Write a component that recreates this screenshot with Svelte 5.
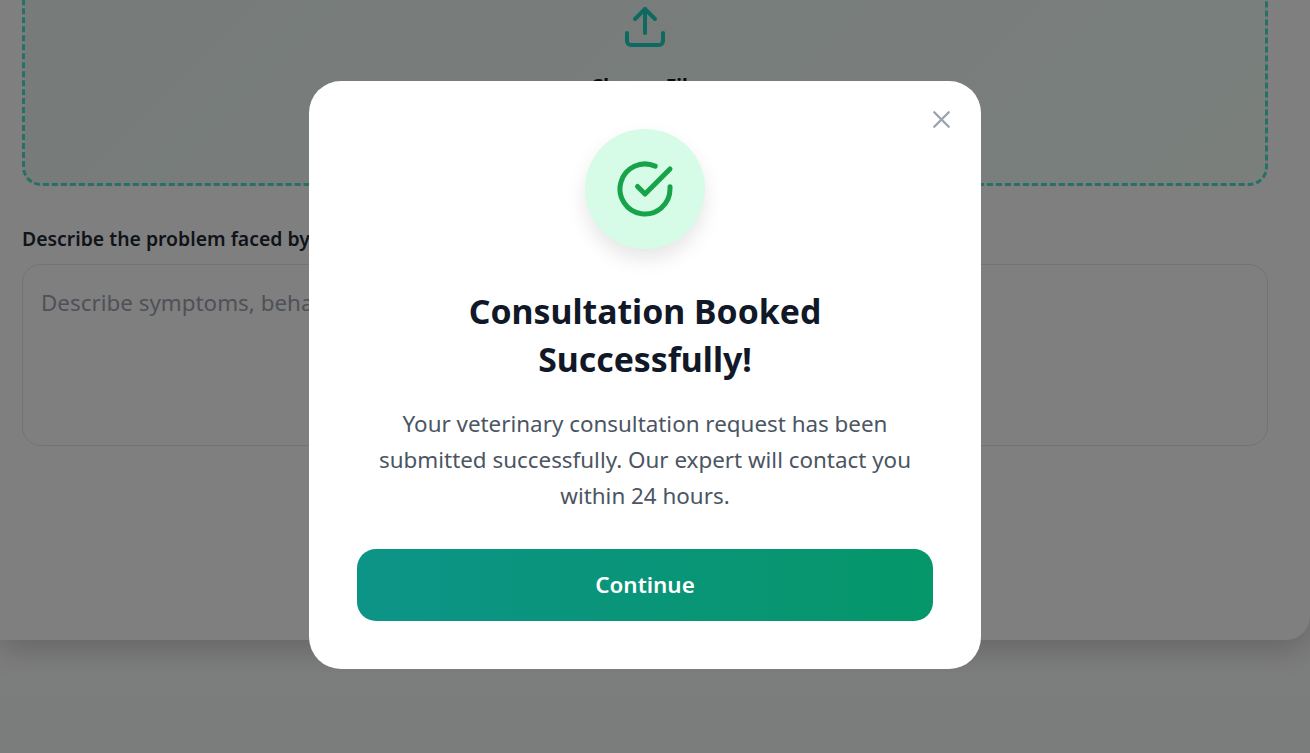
<script>
  let open = $state(true);
</script>

<div class="page">
  <main class="card">
    <div class="dropzone">
      <svg class="upload" viewBox="0 0 24 24" fill="none" stroke="currentColor" stroke-width="2" stroke-linecap="round" stroke-linejoin="round" aria-hidden="true">
        <path d="M21 15v4a2 2 0 0 1-2 2H5a2 2 0 0 1-2-2v-4" />
        <polyline points="17 8 12 3 7 8" />
        <line x1="12" y1="3" x2="12" y2="15" />
      </svg>
      <div class="choose">Choose File</div>
    </div>
    <label class="label" for="problem">Describe the problem faced by your pet</label>
    <textarea id="problem" class="area" placeholder="Describe symptoms, behavior changes, or concerns"></textarea>
  </main>
</div>

{#if open}
  <div class="overlay">
    <div class="modal" role="dialog" aria-modal="true">
      <button class="close" aria-label="Close" onclick={() => (open = false)}>
        <svg viewBox="0 0 24 24" fill="none" stroke="currentColor" stroke-width="2" stroke-linecap="round" stroke-linejoin="round">
          <path d="M18 6 6 18" />
          <path d="m6 6 12 12" />
        </svg>
      </button>
      <div class="badge">
        <svg viewBox="0 0 24 24" fill="none" stroke="currentColor" stroke-width="2" stroke-linecap="round" stroke-linejoin="round" aria-hidden="true">
          <path d="M22 11.08V12a10 10 0 1 1-5.93-9.14" />
          <path d="m9 11 3 3L22 4" />
        </svg>
      </div>
      <h2>Consultation Booked Successfully!</h2>
      <p>Your veterinary consultation request has been submitted successfully. Our expert will contact you within 24 hours.</p>
      <button class="continue" onclick={() => (open = false)}>Continue</button>
    </div>
  </div>
{/if}

<style>
  :global(body) {
    margin: 0;
    overflow: hidden;
    font-family: "Noto Sans", "Open Sans", sans-serif;
  }
  .page {
    height: 753px;
    overflow: hidden;
    background: linear-gradient(180deg, #fafafa 85%, #f4fbf8 100%);
  }
  .card {
    height: 640px;
    box-sizing: border-box;
    padding: 0 42px 0 22px;
    background: #fff;
    border-radius: 0 0 24px 0;
    box-shadow: 0 8px 32px rgba(0, 0, 0, 0.2);
    display: flex;
    flex-direction: column;
  }
  .dropzone {
    box-sizing: border-box;
    height: 226px;
    margin-top: -40px;
    padding-top: 40px;
    flex: none;
    border: 3px dashed #50e0c4;
    border-radius: 19px;
    background: linear-gradient(135deg, #eef8f6, #f4fff9);
    display: flex;
    flex-direction: column;
    align-items: center;
  }
  .upload {
    width: 48px;
    height: 48px;
    color: #1cd4c0;
    flex: none;
  }
  .choose {
    margin-top: 21px;
    font-size: 19.2px;
    font-weight: 700;
    line-height: 28px;
    color: #111827;
  }
  .label {
    margin-top: 39px;
    font-size: 19.4px;
    font-weight: 600;
    line-height: 28px;
    color: #1f2937;
  }
  .area {
    margin-top: 11px;
    height: 182px;
    box-sizing: border-box;
    padding: 19px 18px;
    border: 1px solid #e5e7eb;
    border-radius: 19px;
    background: #fff;
    font: inherit;
    font-size: 22.4px;
    line-height: 38px;
    resize: none;
    outline: none;
  }
  .area::placeholder {
    color: #9ca3af;
  }
  .overlay {
    position: fixed;
    inset: 0;
    box-sizing: border-box;
    padding: 0 20px 4px 0;
    background: rgba(0, 0, 0, 0.5);
    display: flex;
    align-items: center;
    justify-content: center;
  }
  .modal {
    position: relative;
    box-sizing: border-box;
    width: 672px;
    height: 588px;
    padding: 48px;
    background: #fff;
    border-radius: 32px;
    display: flex;
    flex-direction: column;
    align-items: center;
    text-align: center;
  }
  .close {
    position: absolute;
    top: 24px;
    right: 25px;
    width: 29px;
    height: 30px;
    padding: 0;
    border: 0;
    background: none;
    color: #9ca3af;
    cursor: pointer;
  }
  .close svg {
    width: 29px;
    height: 29px;
    display: block;
  }
  .badge {
    width: 120px;
    height: 120px;
    flex: none;
    border-radius: 50%;
    background: #d6fbe6;
    color: #16a34a;
    display: flex;
    align-items: center;
    justify-content: center;
    box-shadow: 0 10px 20px rgba(0, 0, 0, 0.1);
  }
  .badge svg {
    width: 60px;
    height: 60px;
  }
  h2 {
    margin: 38px 0 0;
    font-size: 33.8px;
    line-height: 48px;
    font-weight: 700;
    color: #111827;
    width: 420px;
  }
  p {
    margin: 23px 0 0;
    font-size: 22.4px;
    line-height: 36px;
    color: #4b5563;
  }
  .continue {
    margin-top: 35px;
    width: 100%;
    height: 72px;
    flex: none;
    border: 0;
    border-radius: 19px;
    background: linear-gradient(90deg, #0d9488, #059669);
    color: #fff;
    font: inherit;
    font-size: 22.4px;
    font-weight: 600;
    cursor: pointer;
  }
</style>
